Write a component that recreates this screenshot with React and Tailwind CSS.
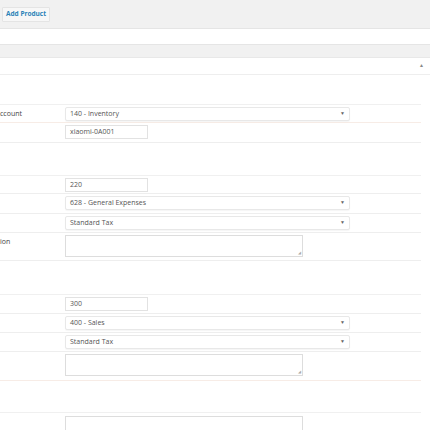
export default function App() {
  const Select = ({ value }) => (
    <div className="w-[285px] h-[14px] border border-[#e8e8e8] rounded-[2px] bg-white flex items-center justify-between pl-[4px] pr-[4px] shadow-[0_1px_1px_rgba(0,0,0,0.04)]">
      <span>{value}</span>
      <span className="text-[5px] text-[#666]">▼</span>
    </div>
  );
  const Input = ({ value }) => (
    <div className="w-[83px] h-[14px] border border-[#e2e2e2] bg-white flex items-center pl-[4px]">{value}</div>
  );
  const Textarea = () => (
    <div className="relative w-[238px] h-[22px] border border-[#dddddd] bg-white">
      <span className="absolute right-[1px] bottom-[0px] text-[4px] text-[#aaa]">◢</span>
    </div>
  );
  const Row = ({ label, h, border = "border-[#eeeeee]", children }) => (
    <div className={`flex items-start pt-[2px] border-b ${border} ${h}`}>
      <div className="w-[65px] pt-[2px] text-[#444]">{label}</div>
      <div className="flex items-center">{children}</div>
    </div>
  );
  const Gap = ({ h }) => <div className={`${h} border-b border-[#f0f0f0]`} />;

  return (
    <div className="w-[430px] h-[430px] overflow-hidden bg-white text-[7px] text-[#555]" style={{ fontFamily: '"Open Sans", "Liberation Sans", sans-serif' }}>
      <div className="h-[29px] bg-[#f1f1f1] border-b border-[#e5e5e5] flex items-center pl-[2px]">
        <div className="h-[15px] px-[3px] flex items-center bg-[#f7f7f7] border border-[#e4e4e4] text-[#2a83b8] font-bold text-[6.5px] rounded-[1px]">Add Product</div>
      </div>
      <div className="h-[16px] bg-white border-b border-[#e5e5e5]" />
      <div className="h-[13px] bg-[#f1f1f1] border-b border-[#e8e8e8]" />
      <div className="h-[17px] border-b border-[#eeeeee] flex items-center justify-end pr-[6px]">
        <span className="text-[5px] text-[#888]">▲</span>
      </div>
      <div className="w-[421px]">
        <Gap h="h-[30px]" />
        <Row label="ccount" h="h-[18px]" border="border-[#f7ece6]">
          <Select value="140 - Inventory" />
        </Row>
        <Row label="" h="h-[20px]">
          <Input value="xiaomi-0A001" />
        </Row>
        <Gap h="h-[33px]" />
        <Row label="" h="h-[18px]">
          <Input value="220" />
        </Row>
        <Row label="" h="h-[20px]">
          <Select value="628 - General Expenses" />
        </Row>
        <Row label="" h="h-[19px]">
          <Select value="Standard Tax" />
        </Row>
        <Row label="ion" h="h-[28px]">
          <Textarea />
        </Row>
        <Gap h="h-[34px]" />
        <Row label="" h="h-[19px]">
          <Input value="300" />
        </Row>
        <Row label="" h="h-[19px]">
          <Select value="400 - Sales" />
        </Row>
        <Row label="" h="h-[19px]">
          <Select value="Standard Tax" />
        </Row>
        <Row label="" h="h-[29px]" border="border-[#f7ece6]">
          <Textarea />
        </Row>
        <Gap h="h-[32px]" />
        <div className="flex pt-[3px]">
          <div className="w-[65px]" />
          <div className="w-[238px] h-[30px] border border-[#dddddd] bg-white" />
        </div>
      </div>
    </div>
  );
}
